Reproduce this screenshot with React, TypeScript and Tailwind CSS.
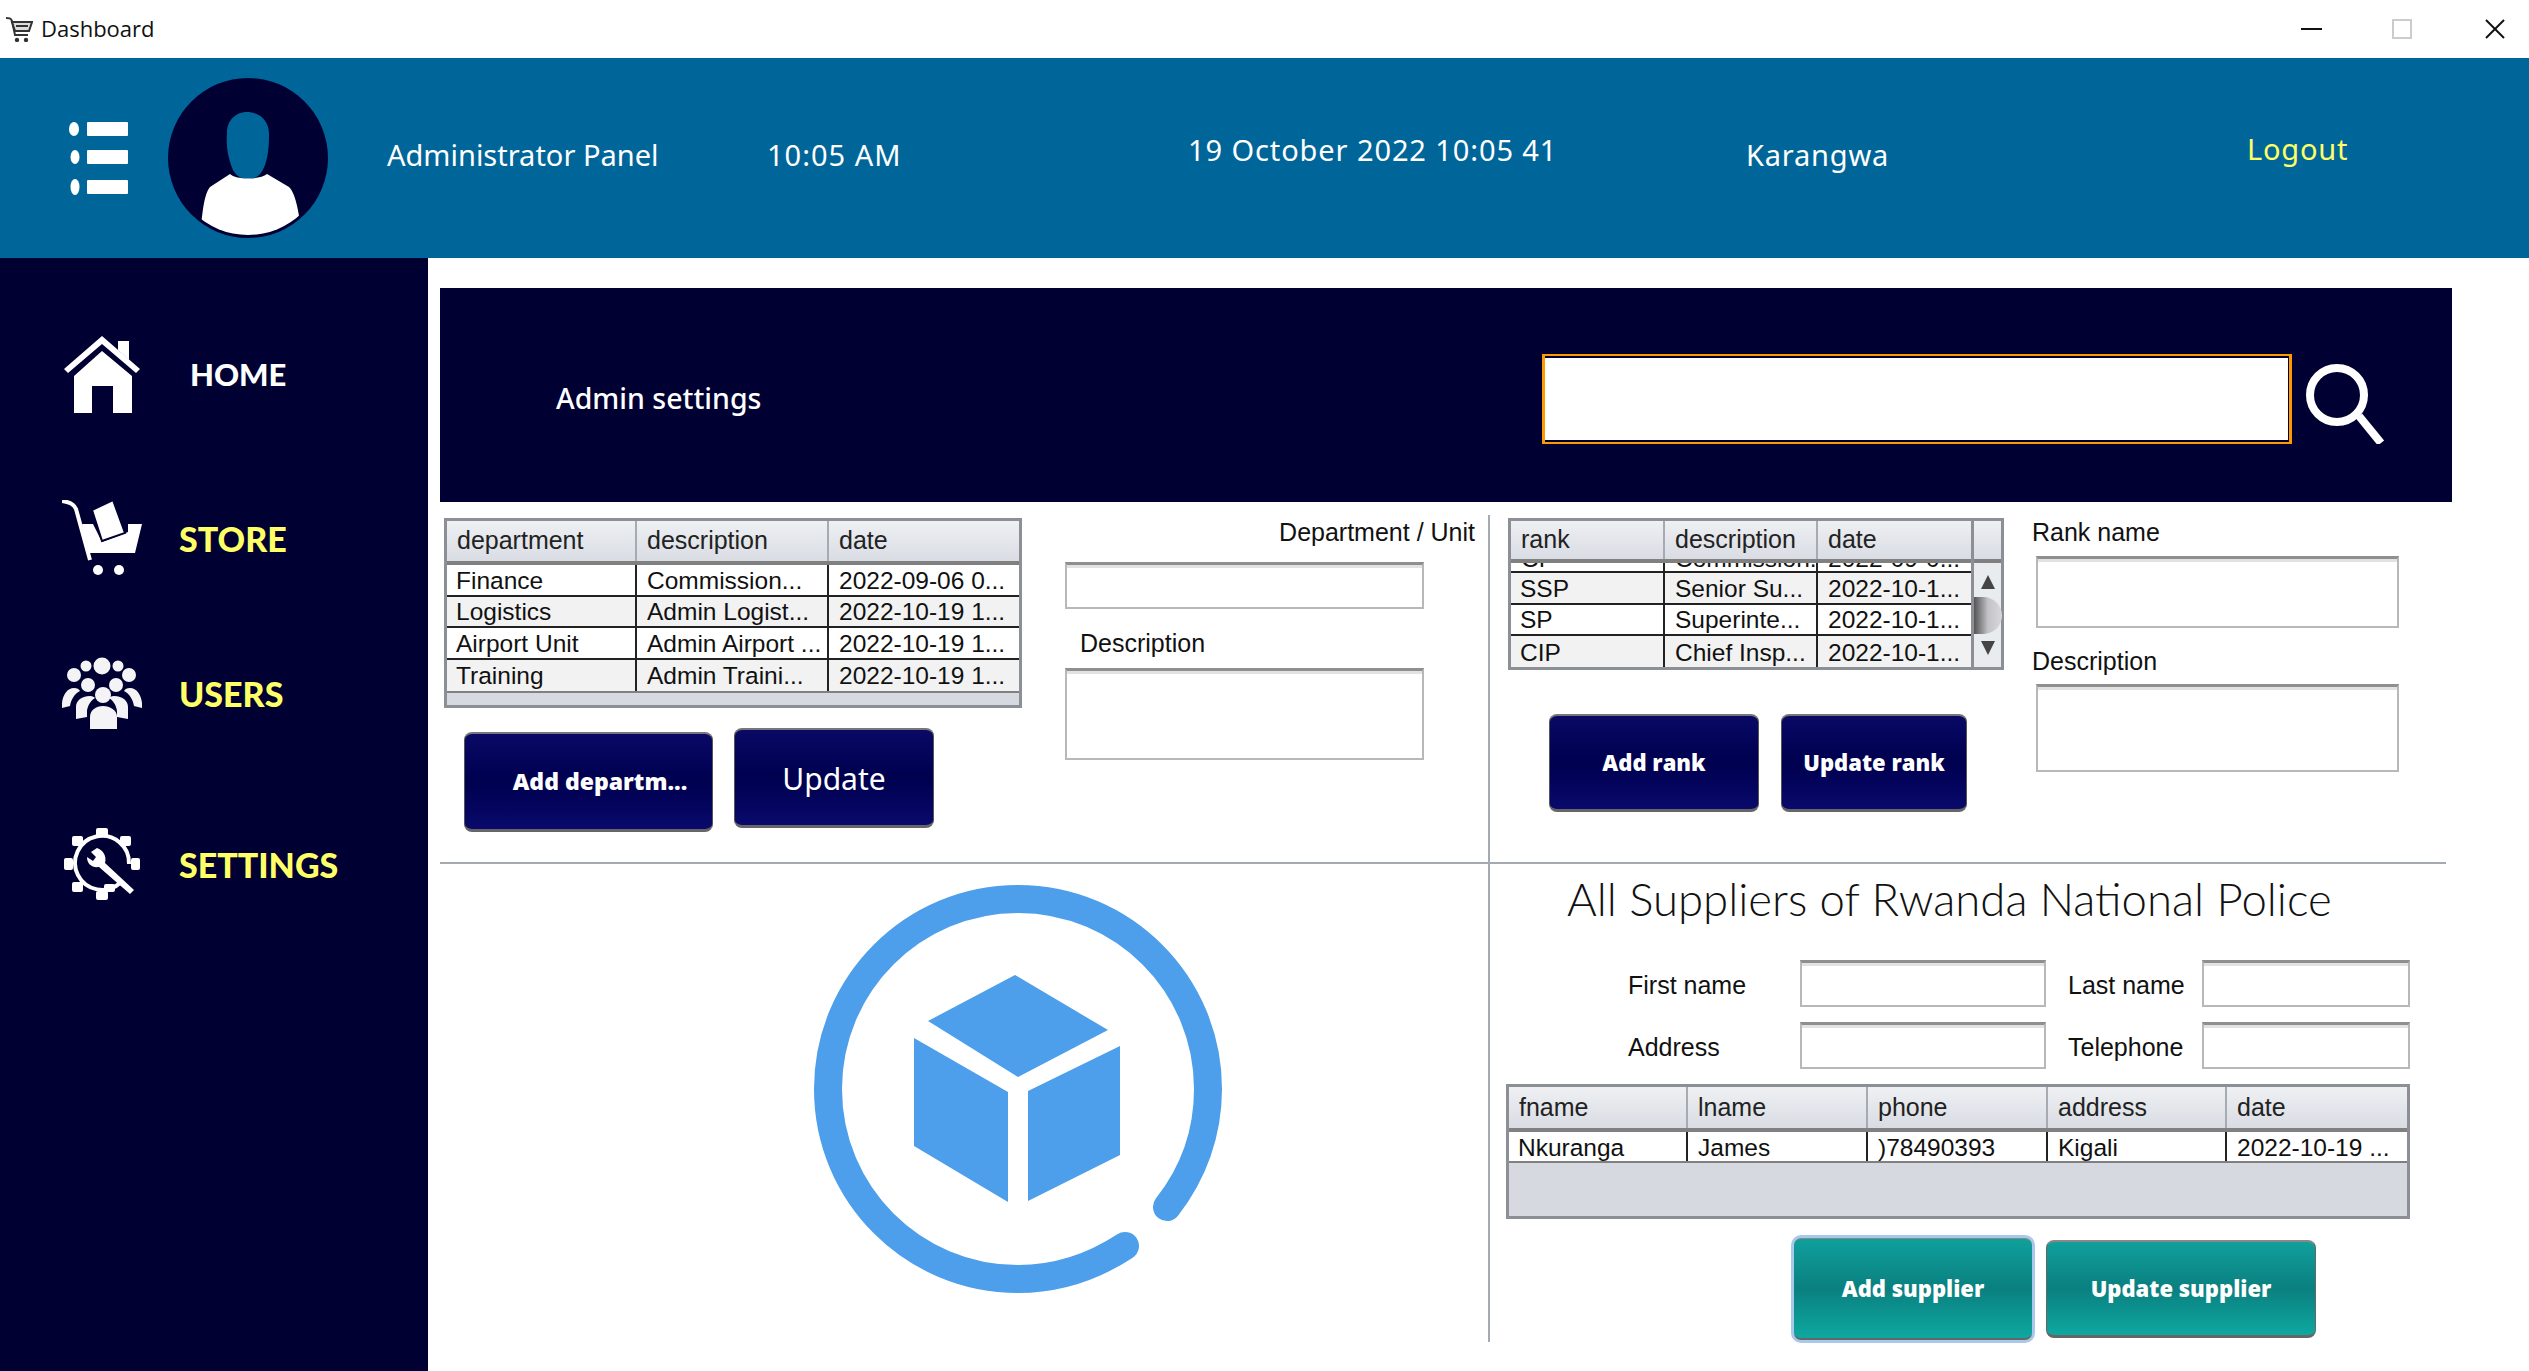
import React from 'react';

const sans = "font-['Liberation_Sans',Arial,sans-serif]";

const MenuIcon = () => (
  <svg width="59" height="73" viewBox="0 0 59 73" fill="white">
    <rect x="18" y="0" width="41" height="14" rx="1" />
    <rect x="18" y="28" width="41" height="14" rx="1" />
    <rect x="18" y="58" width="41" height="14" rx="1" />
    <ellipse cx="5" cy="7" rx="5" ry="7" />
    <ellipse cx="6" cy="35" rx="4.5" ry="7" />
    <ellipse cx="6" cy="65" rx="4.5" ry="8" />
  </svg>
);

const Avatar = () => (
  <svg width="160" height="160" viewBox="0 0 160 160">
    <defs>
      <clipPath id="avatar-clip">
        <circle cx="80" cy="80" r="77" />
      </clipPath>
    </defs>
    <circle cx="80" cy="80" r="80" fill="#000033" />
    <path d="M59 55c0-12 8-21 20-21s22 8 22 22c0 14-1 22-4 31-3 8-7 14-17 14s-15-7-17-14c-3-10-5-18-4-32z" fill="#006699" />
    <g clipPath="url(#avatar-clip)">
      <path d="M62 96c6 6 30 6 37 0l22 13c8 8 10 30 14 52H32c2-25 4-45 10-52z" fill="white" />
    </g>
  </svg>
);

const HomeIcon = () => (
  <svg width="76" height="77" viewBox="0 0 76 77" fill="white">
    <polygon points="54,5 65,5 65,24 54,14" />
    <polygon points="38,0 76,33 72,37 38,8 4,37 0,33" />
    <path d="M38 15L68 40V77H49V50H28V77H10V40z" />
  </svg>
);

const StoreIcon = () => (
  <svg width="80" height="76" viewBox="0 0 80 76" fill="white">
    <path d="M0 1C8 2 12 4 14 9L28 60" fill="none" stroke="white" strokeWidth="4" />
    <polygon points="20,24 31,24 40,42 66,32 66,24 80,24 73,53 26,53" />
    <polygon points="30,10 51,0 63,33 40,41" stroke="#000033" strokeWidth="2" />
    <circle cx="36" cy="70" r="5" />
    <circle cx="57" cy="70" r="5" />
  </svg>
);

const UsersIcon = () => (
  <svg width="80" height="72" viewBox="0 0 80 72" fill="#f4f4f6">
    <circle cx="40" cy="9" r="8.5" />
    <circle cx="24" cy="9" r="5.5" />
    <circle cx="56" cy="9" r="5.5" />
    <circle cx="12" cy="18" r="7" />
    <circle cx="67" cy="18" r="7" />
    <circle cx="26" cy="28" r="7" />
    <circle cx="54" cy="28" r="7" />
    <circle cx="41" cy="38" r="8" />
    <path d="M28 72V60c0-7 6-11 13-11s14 4 14 11v12z" />
    <path d="M14 62V50c0-6 5-11 14-11 3 0 4 1 5 2-5 3-8 9-8 14v5z" />
    <path d="M66 62V50c0-6-5-11-14-11-3 0-4 1-5 2 5 3 8 9 8 14v5z" />
    <path d="M0 51c-1-10 4-20 12-20 3 0 5 1 6 3-6 3-9 9-10 15z" />
    <path d="M80 51c1-10-4-20-12-20-3 0-5 1-6 3 6 3 9 9 10 15z" />
  </svg>
);

const SettingsIcon = () => (
  <svg width="76" height="72" viewBox="0 0 76 72" fill="white">
    <path d="M56 55A27 27 0 1 1 65 36" fill="none" stroke="white" strokeWidth="4" />
    <rect x="32" y="0" width="12" height="9" rx="2" />
    <rect x="32" y="63" width="12" height="9" rx="2" />
    <rect x="0" y="30" width="9" height="12" rx="2" />
    <rect x="67" y="30" width="9" height="12" rx="2" />
    <rect x="8" y="8" width="11" height="10" rx="2" />
    <rect x="56" y="8" width="11" height="10" rx="2" />
    <rect x="8" y="54" width="11" height="10" rx="2" />
    <rect x="40" y="56" width="11" height="8" rx="2" />
    <path d="M33 20l-6 4 5 5-3 4-6-4c0 7 5 11 12 10l31 27 4-4-29-27c2-7-2-13-8-15z" />
  </svg>
);

const SearchIcon = () => (
  <svg width="80" height="80" viewBox="0 0 80 80" fill="none" stroke="white" strokeWidth="8">
    <circle cx="32" cy="31" r="27" />
    <line x1="54" y1="52" x2="76" y2="79" />
  </svg>
);

const CartSmall = () => (
  <svg width="27" height="25" viewBox="0 0 27 25" fill="none" stroke="#333" strokeWidth="2">
    <path d="M0 1c3 0 5 0 6 3l3 14h13" />
    <path d="M6 5h20l-3 9H9z" fill="#ddd" />
    <path d="M10 9h12" />
    <circle cx="11" cy="23" r="1.2" fill="#333" />
    <circle cx="20" cy="23" r="1.2" fill="#333" />
  </svg>
);

const Logo = () => (
  <svg width="408" height="408" viewBox="0 0 408 408" fill="#4d9eeb">
    <path d="M353 322C379 289 394 248 394 204C394 99 309 14 204 14C99 14 14 99 14 204C14 309 99 394 204 394C241 394 276 384 311 361" fill="none" stroke="#4d9eeb" strokeWidth="28" strokeLinecap="round" />
    <polygon points="201,90 294,145 204,192 114,136" />
    <polygon points="100,153 194,207 194,317 100,261" />
    <polygon points="214,206 306,161 306,270 214,316" />
  </svg>
);

const NavItem = ({ icon, label, className }: { icon: React.ReactNode; label: string; className: string }) => (
  <div className={`flex items-center pl-[62px] ${className}`}>
    <div className="w-[80px] flex justify-center">{icon}</div>
    {label === 'HOME' ? (
      <span className="ml-[48px] text-[31px] font-black text-white font-['Lato',sans-serif]">{label}</span>
    ) : (
      <span className="ml-[37px] mt-[1px] text-[34px] font-black text-[#ffff66] font-['Lato',sans-serif]">{label}</span>
    )}
  </div>
);

const Field = ({ className }: { className: string }) => (
  <div className={`bg-white border-2 border-[#b8b8b8] border-t-[3px] border-t-[#8f8f8f] shadow-[inset_0_3px_0_#e2e2e2] ${className}`} />
);

const Label = ({ children, className }: { children: React.ReactNode; className: string }) => (
  <div className={`${sans} text-[25px] leading-[30px] text-[#111] ${className}`}>{children}</div>
);

interface GridProps {
  columns: string[];
  template: string;
  rows: string[][];
  rowClass: string;
  clipped?: string[];
  className: string;
  scrollbar?: boolean;
  headerH: string;
}

const DataGrid = ({ columns, template, rows, rowClass, clipped, className, scrollbar, headerH }: GridProps) => (
  <div className={`relative border-[3px] border-[#8c8f96] bg-[#d6d9e0] flex ${className}`}>
    <div className="flex-1 min-w-0 overflow-hidden">
      <div className={`grid ${template} ${headerH} border-b-[4px] border-[#808080] bg-gradient-to-b from-[#eef0f3] to-[#d9dce3]`}>
        {columns.map((c, i) => (
          <div key={c} className={`${sans} text-[25px] text-[#222] pl-[10px] flex items-center ${i < columns.length - 1 ? 'border-r-2 border-[#a6aab2]' : ''}`}>
            {c}
          </div>
        ))}
      </div>
      {clipped && (
        <div className={`grid ${template} h-[10px] overflow-hidden bg-white border-b-2 border-[#222]`}>
          {clipped.map((c, i) => (
            <div key={c} className={`${sans} text-[24.5px] text-[#111] pl-[10px] h-[8px] leading-[2px] overflow-hidden ${i < clipped.length - 1 ? 'border-r-2 border-[#222]' : ''}`}>
              <div className="-translate-y-[5px]">{c}</div>
            </div>
          ))}
        </div>
      )}
      {rows.map((row, r) => {
        const stripe = clipped ? r % 2 === 0 : r % 2 === 1;
        return (
          <div key={row[0]} className={`grid ${template} ${rowClass} ${stripe ? 'bg-[#f2f2f2]' : 'bg-white'} ${r < rows.length - 1 ? 'border-b-2 border-[#222]' : ''}`}>
            {row.map((c, i) => (
              <div key={c} className={`${sans} text-[24.5px] text-[#111] ${i === 0 ? 'pl-[9px]' : 'pl-[10px]'} pt-[3px] whitespace-nowrap overflow-hidden flex items-center ${i < row.length - 1 ? 'border-r-2 border-[#222]' : ''}`}>
                {c}
              </div>
            ))}
          </div>
        );
      })}
      {!scrollbar && <div className="h-[2px] bg-[#808080]" />}
    </div>
    {scrollbar && (
      <div className="w-[30px] flex flex-col border-l-[3px] border-[#8c8f96] bg-[#e9ecef]">
        <div className="h-[42px] bg-gradient-to-b from-[#eef0f3] to-[#d9dce3] border-b-[4px] border-[#808080]" />
        <div className="flex-1 relative flex flex-col items-center justify-between py-[12px]">
          <svg width="14" height="14" viewBox="0 0 14 14"><polygon points="7,0 14,14 0,14" fill="#444" /></svg>
          <svg width="14" height="14" viewBox="0 0 14 14"><polygon points="0,0 14,0 7,14" fill="#444" /></svg>
          <div className="absolute left-0 top-[34px] w-[28px] h-[37px] rounded-r-full bg-gradient-to-r from-[#555] via-[#c4c4c8] to-[#d8d8dc]" />
        </div>
      </div>
    )}
  </div>
);

const NavyButton = ({ children, className }: { children: React.ReactNode; className: string }) => (
  <button className={`rounded-[8px] border-t-2 border-x border-b-[3px] border-t-[#777] border-x-[#555] border-b-[#666] bg-gradient-to-b from-[#0a0a66] via-[#00004f] to-[#0a0a6c] text-white flex items-center justify-center ${className}`}>
    {children}
  </button>
);

const TealButton = ({ children, className }: { children: React.ReactNode; className: string }) => (
  <button className={`rounded-[8px] border-t-2 border-x border-b-[3px] border-t-[#888] border-x-[#666] border-b-[#666] bg-gradient-to-b from-[#10a09c] via-[#0a8080] to-[#0ea8a0] text-white flex items-center justify-center ${className}`}>
    {children}
  </button>
);

const btnText = "font-['Open_Sans',sans-serif] font-extrabold text-[22px]";

export default function App() {
  return (
    <div className="w-[2529px] h-[1371px] overflow-hidden bg-white flex flex-col">
      {/* title bar */}
      <div className="h-[58px] flex items-center pl-[6px] bg-white">
        <CartSmall />
        <span className="ml-[8px] mb-[2px] text-[22px] text-[#111] font-['Open_Sans',sans-serif]">Dashboard</span>
        <div className="ml-auto flex items-center">
          <div className="w-[21px] h-[2px] bg-[#111]" />
          <div className="ml-[70px] w-[20px] h-[20px] border-2 border-[#ccc]" />
          <svg className="ml-[73px] mr-[24px]" width="20" height="20" viewBox="0 0 20 20" stroke="#111" strokeWidth="2">
            <line x1="1" y1="1" x2="19" y2="19" />
            <line x1="19" y1="1" x2="1" y2="19" />
          </svg>
        </div>
      </div>

      {/* header */}
      <div className="h-[200px] bg-[#006699] flex items-center pl-[69px] pb-[6px] text-white font-['Noto_Sans',sans-serif] text-[29px]">
        <div className="mt-[7px]"><MenuIcon /></div>
        <div className="ml-[40px] mt-[6px]"><Avatar /></div>
        <div className="ml-[59px] w-[380px]">Administrator Panel</div>
        <div className="w-[421px] tracking-[1px]">10:05 AM</div>
        <div className="w-[558px] mb-[10px] tracking-[0.9px]">19 October 2022 10:05 41</div>
        <div className="w-[501px] tracking-[0.8px]">Karangwa</div>
        <div className="mb-[12px] tracking-[0.8px] text-[#ffff66]">Logout</div>
      </div>

      <div className="flex-1 flex min-h-0">
        {/* sidebar */}
        <div className="w-[428px] bg-[#000033] pt-[78px]">
          <NavItem icon={<HomeIcon />} label="HOME" className="h-[77px]" />
          <NavItem icon={<StoreIcon />} label="STORE" className="h-[76px] mt-[87px]" />
          <NavItem icon={<UsersIcon />} label="USERS" className="h-[72px] mt-[81px]" />
          <NavItem icon={<SettingsIcon />} label="SETTINGS" className="h-[72px] mt-[99px]" />
        </div>

        {/* content */}
        <div className="flex-1 pl-[12px] pt-[30px]">
          <div className="w-[2012px] h-[214px] bg-[#000033] flex items-center">
            <div className="ml-[116px] w-[986px] mt-[6px] text-white text-[28.5px] font-medium font-['Noto_Sans',sans-serif]">Admin settings</div>
            <div className="mt-[8px] w-[750px] h-[90px] border-y-2 border-x-[3px] border-[#ff9900] py-[2px] pr-[1px]">
              <div className="w-full h-full bg-white" />
            </div>
            <div className="ml-[13px] mt-[18px]"><SearchIcon /></div>
          </div>

          {/* upper row */}
          <div className="h-[360px] flex">
            <div className="w-[578px] ml-[4px] pt-[16px]">
              <DataGrid
                className="w-[578px] h-[190px]"
                headerH="h-[44px]"
                template="grid-cols-[190px_192px_190px]"
                rowClass="h-[31.5px]"
                columns={['department', 'description', 'date']}
                rows={[
                  ['Finance', 'Commission...', '2022-09-06 0...'],
                  ['Logistics', 'Admin  Logist...', '2022-10-19 1...'],
                  ['Airport Unit', 'Admin Airport ...', '2022-10-19 1... '],
                  ['Training', 'Admin  Traini...', '2022-10-19 1...  '],
                ]}
              />
              <div className="flex items-start pl-[20px]">
                <NavyButton className="mt-[24px] w-[249px] h-[100px] pl-[23px]"><span className="font-['Open_Sans',sans-serif] font-extrabold text-[23px]">Add departm...</span></NavyButton>
                <NavyButton className="mt-[20px] ml-[21px] w-[200px] h-[100px] pt-[2px]"><span className="text-[30px] font-['Noto_Sans',sans-serif]">Update</span></NavyButton>
              </div>
            </div>
            <div className="ml-[43px] w-[410px] pt-[15px]">
              <Label className="text-right">Department / Unit</Label>
              <Field className="mt-[15px] w-[359px] h-[47px]" />
              <Label className="mt-[19px] pl-[15px]">Description</Label>
              <Field className="mt-[10px] w-[359px] h-[92px]" />
            </div>
            <div className="ml-[13px] mt-[13px] w-[2px] bg-[#a5aab0]" />
            <div className="ml-[18px] w-[496px] pt-[16px]">
              <DataGrid
                className="w-[496px] h-[152px]"
                headerH="h-[42px]"
                scrollbar
                template="grid-cols-[154px_153px_156px]"
                rowClass="h-[31.5px]"
                columns={['rank', 'description', 'date']}
                clipped={['CP', 'Commission...', '2022-09-0...']}
                rows={[
                  ['SSP', 'Senior Su...', '2022-10-1...'],
                  ['SP', 'Superinte...', '2022-10-1... '],
                  ['CIP', 'Chief Insp...', '2022-10-1...  '],
                ]}
              />
              <div className="flex mt-[44px] ml-[41px]">
                <NavyButton className="w-[210px] h-[98px]"><span className={btnText}>Add rank</span></NavyButton>
                <NavyButton className="ml-[22px] w-[186px] h-[98px]"><span className={btnText}>Update rank</span></NavyButton>
              </div>
            </div>
            <div className="ml-[28px] pt-[15px]">
              <Label>Rank name</Label>
              <Field className="mt-[9px] ml-[4px] w-[363px] h-[72px]" />
              <Label className="mt-[18px]">Description</Label>
              <Field className="mt-[8px] ml-[4px] w-[363px] h-[88px]" />
            </div>
          </div>

          <div className="w-[2006px] h-[2px] bg-[#a5aab0]" />

          {/* lower row */}
          <div className="flex">
            <div className="w-[1048px]">
              <div className="ml-[374px] mt-[21px]"><Logo /></div>
            </div>
            <div className="w-[2px] h-[478px] bg-[#a5aab0]" />
            <div className="pl-[15px]">
              <div className="ml-[62px] mt-[3px] h-[64px] flex items-center text-[45.5px] font-light text-[#111] font-['Lato',sans-serif]">
                All Suppliers of Rwanda National Police
              </div>
              <div className="flex items-center mt-[29px]">
                <Label className="ml-[123px] w-[172px] mt-[2px]">First name</Label>
                <Field className="w-[246px] h-[47px]" />
                <Label className="ml-[22px] w-[134px] mt-[2px]">Last name</Label>
                <Field className="w-[208px] h-[47px]" />
              </div>
              <div className="flex items-center mt-[15px]">
                <Label className="ml-[123px] w-[172px] mt-[2px]">Address</Label>
                <Field className="w-[246px] h-[47px]" />
                <Label className="ml-[22px] w-[134px] mt-[2px]">Telephone</Label>
                <Field className="w-[208px] h-[47px]" />
              </div>
              <DataGrid
                className="mt-[15px] ml-[1px] w-[904px] h-[135px]"
                headerH="h-[45px]"
                template="grid-cols-[179px_180px_180px_179px_180px]"
                rowClass="h-[29px]"
                columns={['fname', 'lname', 'phone', 'address', 'date']}
                rows={[['Nkuranga', 'James', ')78490393', 'Kigali', '2022-10-19 ...']]}
              />
              <div className="flex items-start mt-[18px] ml-[288px]">
                <TealButton className="w-[240px] h-[104px] outline outline-[3px] -outline-offset-[1px] outline-[#a9c8ea]"><span className={btnText}>Add supplier</span></TealButton>
                <TealButton className="ml-[13px] mt-[3px] w-[270px] h-[98px]"><span className={btnText}>Update supplier</span></TealButton>
              </div>
            </div>
          </div>
        </div>
      </div>
    </div>
  );
}
